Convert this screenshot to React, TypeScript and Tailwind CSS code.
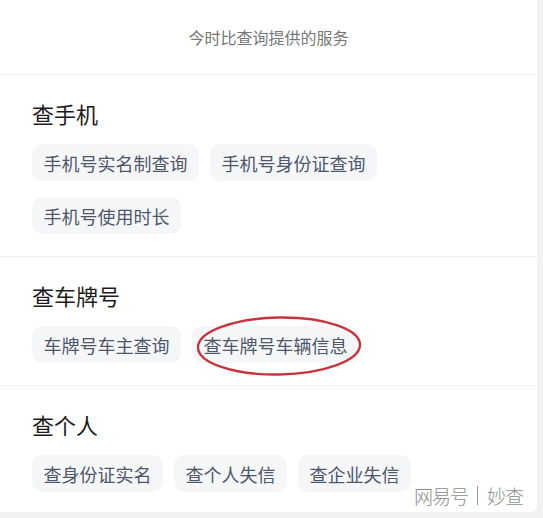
import React from 'react';

const sections = [
  { title: '查手机', items: ['手机号实名制查询', '手机号身份证查询', '手机号使用时长'] },
  { title: '查车牌号', items: ['车牌号车主查询', '查车牌号车辆信息'] },
  { title: '查个人', items: ['查身份证实名', '查个人失信', '查企业失信'] },
];

function Chip({ label, circled }: { label: string; circled?: boolean }) {
  return (
    <div className="relative flex h-[37px] items-center rounded-[10px] bg-[#f5f6f8] px-[11.5px] text-[18px] leading-none text-[#4f576b]">
      {label}
      {circled && (
        <svg
          className="pointer-events-none absolute left-[4px] top-[-10px] overflow-visible"
          width="166"
          height="60"
          viewBox="0 0 166 60"
        >
          <ellipse
            cx="83"
            cy="30"
            rx="81"
            ry="28.5"
            fill="none"
            stroke="#c8343b"
            strokeWidth="2.4"
            transform="rotate(-1 83 30)"
          />
        </svg>
      )}
    </div>
  );
}

export default function App() {
  return (
    <div className="relative h-[518px] w-[543px] overflow-hidden bg-[#f2f2f3] font-['Noto_Sans_CJK_SC','Noto_Sans',sans-serif]">
      <div className="h-[512px] w-[537px] rounded-br-[6px] bg-white">
        <div className="flex h-[75px] items-center justify-center border-b border-[#efefef] pb-px text-[16px] text-[#777777]">
          今时比查询提供的服务
        </div>

        {sections.map((s, i) => (
          <div
            key={s.title}
            className={
              i < sections.length - 1
                ? 'border-b border-[#efefef] px-[32px] pb-[22px] pt-[23px]'
                : 'px-[32px] pt-[23px]'
            }
          >
            <h2 className="h-[30px] text-[22px] leading-[30px] text-[#1c1c1c]">{s.title}</h2>
            <div className="mt-[16px] flex flex-wrap gap-x-[11px] gap-y-[16px]">
              {s.items.map((it) => (
                <Chip key={it} label={it} circled={it === '查车牌号车辆信息'} />
              ))}
            </div>
          </div>
        ))}
      </div>

      {/* watermark */}
      <div className="absolute left-[414px] top-[486px] flex items-center text-[19px] font-light leading-none text-[#8e8e8e] [text-shadow:0_0_2px_#fff]">
        <span className="tracking-[-1px]">网易号</span>
        <span className="mx-[9px] h-[19px] w-px bg-[#9a9a9a]" />
        <span className="tracking-[-1px]">妙查</span>
      </div>
    </div>
  );
}
